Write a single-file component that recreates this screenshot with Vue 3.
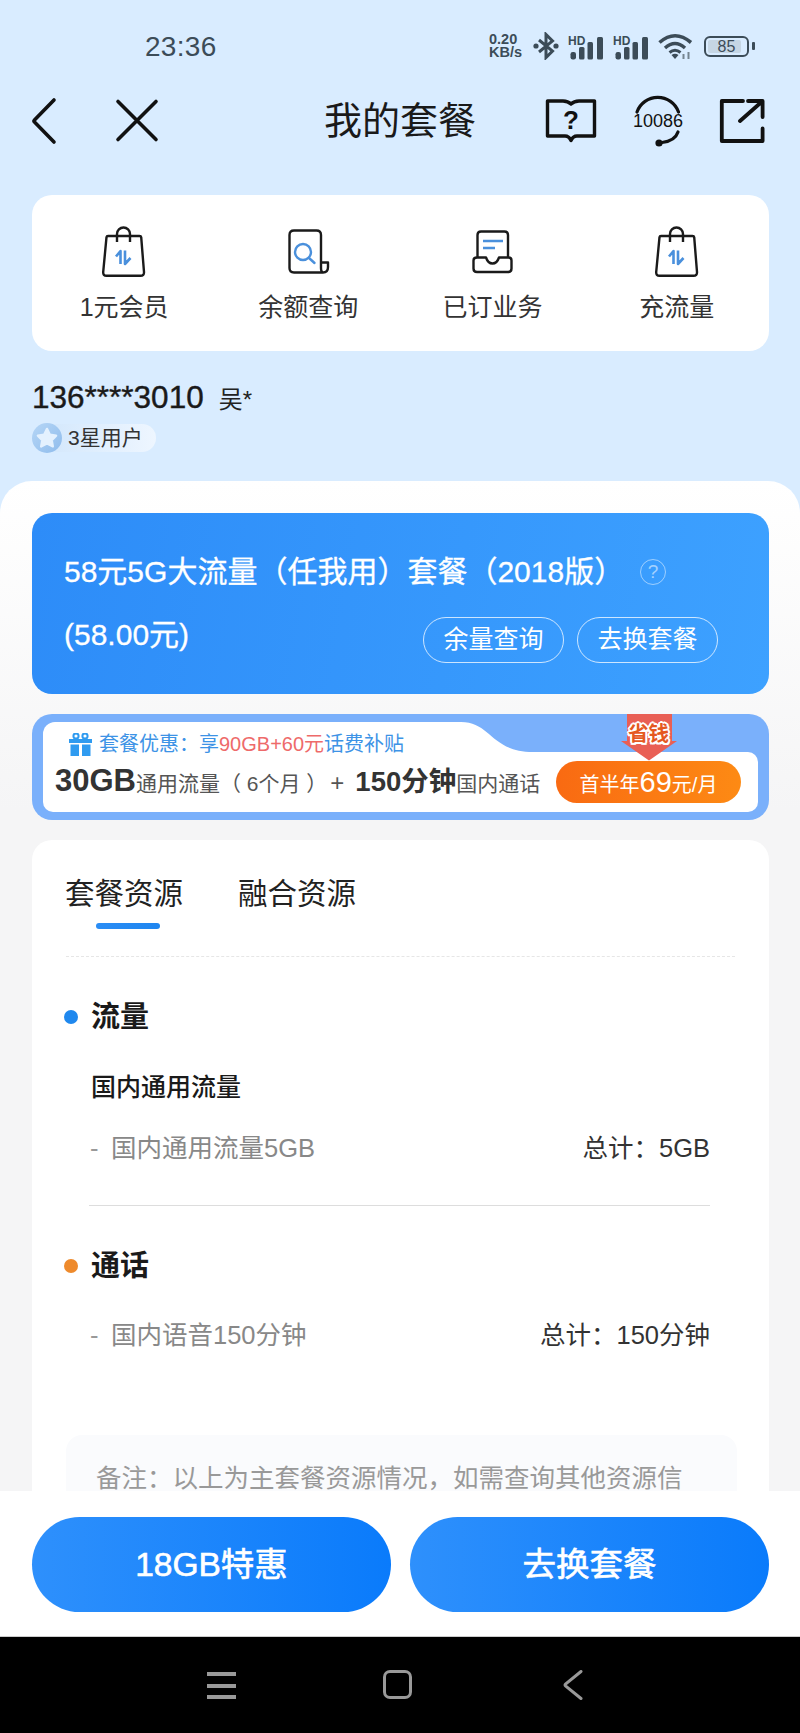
<template>
  <div class="page">
    <div class="status">
      <span class="time">23:36</span>
      <div class="status-icons">
        <div class="speed"><span>0.20</span><span>KB/s</span></div>
        <svg width="26" height="28" viewBox="0 0 26 28" class="st-bt">
          <path d="M6 8 L19.5 19 L13 25.5 V2.5 L19.5 9 L6 20" fill="none" stroke="#3c4c58" stroke-width="3" />
          <circle cx="3" cy="14" r="2.6" fill="#3c4c58" />
          <circle cx="23" cy="14" r="2.6" fill="#3c4c58" />
        </svg>
        <svg v-for="n in 2" :key="n" width="36" height="28" viewBox="0 -4 36 28">
          <text x="0" y="9" class="hd">HD</text>
          <rect x="2.5" y="16" width="5.5" height="7.5" rx="2.2" fill="#3c4c58" />
          <rect x="11" y="11" width="5.5" height="12.5" rx="1.5" fill="#3c4c58" />
          <rect x="19.5" y="6" width="5.5" height="17.5" rx="1.5" fill="#3c4c58" />
          <rect x="29" y="1" width="6" height="22.5" rx="1.5" fill="#3c4c58" />
        </svg>
        <svg width="35" height="27" viewBox="0 0 35 27">
          <path d="M1.5 9.5 Q17 -4 33 9.5" fill="none" stroke="#3c4c58" stroke-width="3.6" />
          <path d="M7 15 Q17 6 27 15" fill="none" stroke="#3c4c58" stroke-width="3.4" />
          <path d="M11.5 19.5 Q17 15 22.5 19.5" fill="none" stroke="#3c4c58" stroke-width="3" />
          <path d="M13.5 22 L17 26 L20.5 22 Q17 19.5 13.5 22 Z" fill="#3c4c58" />
          <path d="M25.5 21 V26 M30.5 19 V26" stroke="#75848f" stroke-width="2" />
        </svg>
        <div class="battery">
          <div class="battery-body"><span class="battery-fill"></span><span class="battery-num">85</span></div>
          <i class="battery-nub"></i>
        </div>
      </div>
    </div>

    <div class="topbar">
      <div class="top-left">
        <svg width="28" height="48" viewBox="0 0 28 48">
          <path d="M24 3 L4.5 23 Q3.5 24 4.5 25 L24 45" fill="none" stroke="#111" stroke-width="3.6" stroke-linecap="round" />
        </svg>
        <svg width="46" height="46" viewBox="0 0 46 46">
          <path d="M4 3.5 L42 41.5 M42 3.5 L4 41.5" fill="none" stroke="#111" stroke-width="3.6" stroke-linecap="round" />
        </svg>
      </div>
      <div class="title">我的套餐</div>
      <div class="top-right">
        <svg width="54" height="48" viewBox="0 0 54 48">
          <path d="M3.5 4 H19 Q24 4 27 7 Q30 4 35 4 H50.5 V39 H33 Q29 39 27 43.5 Q25 39 21 39 H3.5 Z" fill="none" stroke="#111" stroke-width="3.4" stroke-linejoin="round" />
          <text x="27" y="32" text-anchor="middle" class="book-q">?</text>
        </svg>
        <svg width="54" height="52" viewBox="0 0 54 52">
          <path d="M6 17 A22 22 0 0 1 47.5 17" fill="none" stroke="#111" stroke-width="3.2" stroke-linecap="round" />
          <text x="27" y="31.5" text-anchor="middle" class="hot-num">10086</text>
          <path d="M47 37 Q44 46 31 47.5" fill="none" stroke="#111" stroke-width="3.2" stroke-linecap="round" />
          <circle cx="28" cy="48" r="3.6" fill="#111" />
        </svg>
        <svg width="48" height="48" viewBox="0 0 48 48">
          <path d="M25 4 H3.8 V44 H44.6 V31.5" fill="none" stroke="#111" stroke-width="3.8" stroke-linecap="round" stroke-linejoin="round" />
          <path d="M22 24 L43.5 5 M30 4 H44.6 V20" fill="none" stroke="#111" stroke-width="3.8" stroke-linecap="round" stroke-linejoin="round" />
        </svg>
      </div>
    </div>

    <div class="shortcuts">
      <div v-for="item in shortcuts" :key="item.label" class="shortcut">
        <div class="shortcut-icon">
          <svg v-if="item.icon === 'bag'" width="48" height="52" viewBox="0 0 48 52">
            <path d="M6.5 11.2 Q6.7 10 8 10 H39.5 Q41 10 41.2 11.2 L44 46 Q44.2 49.8 40.5 49.8 H6.5 Q3 49.8 3.2 46 Z" fill="none" stroke="#1a1a1a" stroke-width="2.4" stroke-linejoin="round" />
            <path d="M17 16 V8 A6.5 6.5 0 0 1 30 8 V16" fill="none" stroke="#1a1a1a" stroke-width="2.4" />
            <path d="M20.5 38 V25 L16 30.5 M25 24.5 V38 L30.5 32" fill="none" stroke="#4a90dc" stroke-width="2.6" stroke-linejoin="round" />
          </svg>
          <svg v-else-if="item.icon === 'doc'" width="46" height="50" viewBox="0 0 46 50">
            <path d="M36 36 V8 Q36 3.5 31.5 3.5 H9 Q4.5 3.5 4.5 8 V41 Q4.5 45.5 9 45.5 H38 Q43 45.5 43 40 V35.5 H36 V41 Q36 45.5 38 45.5" fill="none" stroke="#1a1a1a" stroke-width="2.4" stroke-linejoin="round" />
            <circle cx="18" cy="25" r="8" fill="none" stroke="#4a90dc" stroke-width="2.4" />
            <path d="M24 31 L29.5 36" fill="none" stroke="#4a90dc" stroke-width="2.4" stroke-linecap="round" />
          </svg>
          <svg v-else width="46" height="48" viewBox="0 0 46 48">
            <path d="M7.5 29 V7 Q7.5 3.5 11 3.5 H34.5 Q38 3.5 38 7 V29" fill="none" stroke="#1a1a1a" stroke-width="2.4" />
            <path d="M7 29.5 H16 Q18 35.5 22.5 35.5 Q27 35.5 29 29.5 H38.5 Q41.5 29.5 41.5 32.5 V40.5 Q41.5 44 38 44 H7 Q3.5 44 3.5 40.5 V32.5 Q3.5 29.5 7 29.5 Z" fill="#fff" stroke="#1a1a1a" stroke-width="2.4" stroke-linejoin="round" />
            <path d="M13 13 H33 M13 20 H25" fill="none" stroke="#4a90dc" stroke-width="2.4" />
          </svg>
        </div>
        <div class="shortcut-label">{{ item.label }}</div>
      </div>
    </div>

    <div class="user">
      <div class="user-line"><span class="phone">136****3010</span><span class="name">吴*</span></div>
      <div class="level">
        <div class="level-star">
          <svg width="22" height="22" viewBox="0 0 24 24">
            <path d="M12 2 L15.2 8.4 L22 9.4 L17.2 14.3 L18.4 21.2 L12 18 L5.6 21.2 L6.8 14.3 L2 9.4 L8.8 8.4 Z" fill="#e4f1fe" stroke="#e4f1fe" stroke-width="2.5" stroke-linejoin="round" />
          </svg>
        </div>
        <span class="level-text">3星用户</span>
      </div>
    </div>

    <div class="sheet">
      <div class="plan">
        <div class="plan-title">
          <span>58元5G大流量（任我用）套餐（2018版）</span>
          <i class="plan-help">?</i>
        </div>
        <div class="plan-row">
          <span class="plan-price">(58.00元)</span>
          <div class="plan-btns">
            <div class="plan-btn">余量查询</div>
            <div class="plan-btn">去换套餐</div>
          </div>
        </div>
      </div>

      <div class="promo">
        <div class="promo-top">
          <div class="promo-tab">
            <svg width="25" height="23" viewBox="0 0 25 23">
              <path d="M1 6 H24 V10 H1 Z M2.5 11.5 H11 V23 H2.5 Z M14 11.5 H22.5 V23 H14 Z" fill="#2f9bf0" />
              <circle cx="8" cy="3" r="2.6" fill="none" stroke="#2f9bf0" stroke-width="2" />
              <circle cx="17" cy="3" r="2.6" fill="none" stroke="#2f9bf0" stroke-width="2" />
            </svg>
            <span class="promo-text">套餐优惠：享<em>90GB+60元</em>话费补贴</span>
          </div>
          <svg class="promo-curve" width="72" height="30" viewBox="0 0 72 30" preserveAspectRatio="none">
            <path d="M0 0 C30 0 30 30 72 30 L0 30 Z" fill="#fff" />
          </svg>
        </div>
        <div class="promo-body">
          <span class="promo-desc"><b>30GB</b>通用流量（ 6个月 ）<i class="plus">+</i><b class="mins">150分钟</b>国内通话</span>
          <div class="promo-buy">首半年<span>69</span>元/月</div>
        </div>
        <div class="save">
          <svg width="58" height="47" viewBox="0 0 58 47">
            <path d="M7 0 H52 V27 H57 L29 46.5 L1 27 H7 Z" fill="#e95f55" />
          </svg>
          <span class="save-text">省钱</span>
        </div>
      </div>

      <div class="res">
        <div class="tabs">
          <div class="tab active">
            <span>套餐资源</span>
            <i class="tab-bar"></i>
          </div>
          <div class="tab">融合资源</div>
        </div>
        <div class="dash"></div>

        <div class="sec-head">
          <i class="dot blue"></i>
          <span>流量</span>
        </div>
        <div class="sec-sub">国内通用流量</div>
        <div class="sec-row">
          <span class="row-name"><i>-</i>国内通用流量5GB</span>
          <span class="row-total">总计：5GB</span>
        </div>
        <div class="sec-line"></div>

        <div class="sec-head">
          <i class="dot orange"></i>
          <span>通话</span>
        </div>
        <div class="sec-row voice">
          <span class="row-name"><i>-</i>国内语音150分钟</span>
          <span class="row-total">总计：150分钟</span>
        </div>

        <div class="note">备注：以上为主套餐资源情况，如需查询其他资源信</div>
      </div>
    </div>

    <div class="footer">
      <div class="foot-btn">18GB特惠</div>
      <div class="foot-btn">去换套餐</div>
    </div>

    <div class="navbar">
      <div class="nav-menu"><i></i><i></i><i></i></div>
      <div class="nav-home"></div>
      <svg width="20" height="30" viewBox="0 0 20 30">
        <path d="M18 1.5 L2.5 14 Q1.5 15 2.5 16 L18 28.5" fill="none" stroke="#999" stroke-width="3" stroke-linecap="round" />
      </svg>
    </div>
  </div>
</template>

<script setup>
const shortcuts = [
  { label: '1元会员', icon: 'bag' },
  { label: '余额查询', icon: 'doc' },
  { label: '已订业务', icon: 'tray' },
  { label: '充流量', icon: 'bag' }
]
</script>

<style>
body {
  margin: 0;
  background: #d9ecff;
}
</style>

<style scoped>
.page {
  width: 800px;
  height: 1733px;
  display: flex;
  flex-direction: column;
  overflow: hidden;
  background: #d9ecff;
  font-family: "Liberation Sans", "Noto Sans CJK SC", sans-serif;
  color: #222;
}

/* status bar */
.status {
  height: 95px;
  flex: none;
  display: flex;
  align-items: flex-start;
  padding: 32px 45px 0 145px;
  box-sizing: border-box;
}
.time {
  font-size: 28px;
  line-height: 30px;
  color: #3c4c58;
  letter-spacing: 0.3px;
}
.status-icons {
  margin-left: auto;
  display: flex;
  align-items: center;
  gap: 9px;
}
.speed {
  width: 35px;
  display: flex;
  flex-direction: column;
  font-size: 14.5px;
  line-height: 13px;
  font-weight: 700;
  color: #3c4c58;
  white-space: nowrap;
}
.hd {
  font-family: "Liberation Sans", sans-serif;
  font-size: 12px;
  font-weight: 700;
  fill: #3c4c58;
}
.battery {
  display: flex;
  align-items: center;
  gap: 3px;
  margin-left: 2px;
}
.battery-body {
  position: relative;
  width: 45px;
  height: 21px;
  box-sizing: border-box;
  border: 2px solid #3c4c58;
  border-radius: 6px;
  display: flex;
  align-items: center;
  justify-content: center;
  overflow: hidden;
}
.battery-fill {
  position: absolute;
  left: 2px;
  top: 2px;
  bottom: 2px;
  width: 80%;
  background: #c6d6e4;
  border-radius: 2px;
}
.battery-num {
  position: relative;
  font-size: 16px;
  line-height: 17px;
  color: #3c4c58;
}
.battery-nub {
  width: 3px;
  height: 8px;
  background: #3c4c58;
  border-radius: 1px;
}

/* top bar */
.topbar {
  height: 52px;
  flex: none;
  display: grid;
  grid-template-columns: 1fr auto 1fr;
  align-items: center;
  padding: 0 34px;
}
.top-left {
  display: flex;
  align-items: center;
  gap: 56px;
  margin-left: -4px;
}
.title {
  font-size: 38px;
  line-height: 52px;
  color: #1a1a1a;
}
.top-right {
  display: flex;
  justify-content: flex-end;
  align-items: center;
  gap: 33px;
}
.book-q {
  font-family: "Liberation Sans", sans-serif;
  font-size: 26px;
  font-weight: 700;
  fill: #111;
}
.hot-num {
  font-family: "Liberation Sans", sans-serif;
  font-size: 18px;
  fill: #111;
}

/* shortcuts */
.shortcuts {
  flex: none;
  margin: 48px 31px 0 32px;
  height: 156px;
  box-sizing: border-box;
  padding-top: 31px;
  background: #fff;
  border-radius: 20px;
  display: grid;
  grid-template-columns: repeat(4, 1fr);
}
.shortcut {
  display: flex;
  flex-direction: column;
  align-items: center;
}
.shortcut-icon {
  height: 52px;
  display: flex;
  align-items: center;
  justify-content: center;
}
.shortcut-label {
  margin-top: 11px;
  font-size: 25px;
  line-height: 36px;
  color: #333;
}

/* user */
.user {
  flex: none;
  margin: 26px 0 0 32px;
}
.user-line {
  display: flex;
  align-items: center;
  height: 40px;
}
.phone {
  font-size: 31.5px;
  color: #1a1a1a;
  -webkit-text-stroke: 0.4px #1a1a1a;
}
.name {
  font-size: 24px;
  margin-left: 15px;
  color: #222;
}
.level {
  margin-top: 6px;
  display: flex;
  align-items: center;
  height: 30px;
}
.level-star {
  position: relative;
  z-index: 1;
  width: 30px;
  height: 30px;
  border-radius: 50%;
  background: linear-gradient(135deg, #b6d6f6, #8fbcec);
  display: flex;
  align-items: center;
  justify-content: center;
  box-sizing: border-box;
}
.level-text {
  margin-left: -12px;
  height: 28px;
  line-height: 28px;
  padding: 0 13px 0 18px;
  border-radius: 0 14px 14px 0;
  font-size: 21px;
  color: #333;
  background: linear-gradient(90deg, #d4e8fc, #eef6ff);
}

/* white sheet */
.sheet {
  flex: 1;
  min-height: 0;
  margin-top: 28px;
  padding: 32px 31px 0 32px;
  overflow: hidden;
  border-radius: 32px 32px 0 0;
  background: linear-gradient(180deg, #fff 0, #f5f5f6 330px);
}
.plan {
  height: 181px;
  box-sizing: border-box;
  padding: 40px 51px 0 32px;
  border-radius: 20px;
  background: linear-gradient(100deg, #2d8cf8, #3da1ff);
  color: #fff;
}
.plan-title {
  display: flex;
  align-items: center;
  font-size: 30px;
  line-height: 38px;
  white-space: nowrap;
  -webkit-text-stroke: 0.3px #fff;
}
.plan-help {
  width: 26px;
  height: 26px;
  margin-left: 16px;
  box-sizing: border-box;
  border: 1.5px solid rgba(255, 255, 255, 0.5);
  border-radius: 50%;
  font-style: normal;
  font-size: 19px;
  line-height: 23px;
  text-align: center;
  color: rgba(255, 255, 255, 0.55);
  -webkit-text-stroke: 0;
}
.plan-row {
  margin-top: 26px;
  display: flex;
  justify-content: space-between;
  align-items: flex-start;
}
.plan-price {
  font-size: 30px;
  line-height: 36px;
  -webkit-text-stroke: 0.3px #fff;
}
.plan-btns {
  display: flex;
  gap: 13px;
}
.plan-btn {
  width: 141px;
  height: 46px;
  box-sizing: border-box;
  border: 1.5px solid rgba(255, 255, 255, 0.75);
  border-radius: 23px;
  font-size: 25px;
  line-height: 43px;
  text-align: center;
}

/* promo */
.promo {
  position: relative;
  margin-top: 20px;
  height: 106px;
  box-sizing: border-box;
  padding: 8px 11px;
  border-radius: 20px;
  background: #7ab0fb;
}
.promo-top {
  display: flex;
  height: 30px;
}
.promo-tab {
  width: 418px;
  height: 30px;
  box-sizing: border-box;
  padding: 14px 0 0 25px;
  display: flex;
  align-items: center;
  gap: 6px;
  background: #fff;
  border-radius: 12px 0 0 0;
}
.promo-curve {
  display: block;
}
.promo-text {
  font-size: 20px;
  line-height: 26px;
  color: #3d93e6;
  white-space: nowrap;
}
.promo-text em {
  font-style: normal;
  color: #ee6a6a;
}
.promo-body {
  height: 60px;
  box-sizing: border-box;
  padding: 0 17px 0 12px;
  background: #fff;
  border-radius: 0 10px 10px 10px;
  display: flex;
  align-items: center;
  justify-content: space-between;
}
.promo-desc {
  font-size: 21px;
  line-height: 34px;
  color: #555;
  white-space: nowrap;
}
.promo-desc b {
  font-size: 31px;
  font-weight: 700;
  color: #333;
}
.plus {
  font-style: normal;
  font-size: 24px;
  margin: 0 11px 0 3px;
}
.promo-desc .mins {
  font-size: 27.5px;
}
.promo-buy {
  width: 185px;
  height: 42px;
  border-radius: 21px;
  background: linear-gradient(90deg, #f96a12, #fd8a14);
  color: #fff;
  font-size: 20px;
  line-height: 42px;
  text-align: center;
  white-space: nowrap;
}
.promo-buy span {
  font-size: 29px;
}
.save {
  position: absolute;
  left: 588px;
  top: 0;
  width: 58px;
  height: 47px;
}
.save svg {
  display: block;
}
.save-text {
  position: absolute;
  left: 8px;
  top: 5px;
  font-size: 20.5px;
  line-height: 30px;
  font-weight: 700;
  color: #e5581f;
  white-space: nowrap;
  text-shadow: 2px 0 0 #fff, -2px 0 0 #fff, 0 2px 0 #fff, 0 -2px 0 #fff, 1.5px 1.5px 0 #fff, -1.5px 1.5px 0 #fff, 1.5px -1.5px 0 #fff, -1.5px -1.5px 0 #fff;
}

/* resources */
.res {
  margin-top: 20px;
  padding: 36px 34px 0 33px;
  height: 700px;
  background: #fff;
  border-radius: 20px 20px 0 0;
}
.tabs {
  display: flex;
  align-items: flex-start;
  gap: 55px;
  height: 53px;
}
.tab {
  font-size: 29.5px;
  line-height: 36px;
  color: #222;
  white-space: nowrap;
}
.tab span {
  display: block;
}
.tab-bar {
  display: block;
  width: 64px;
  height: 6px;
  margin: 11px 0 0 31px;
  border-radius: 3px;
  background: linear-gradient(90deg, #2a8df5, #1f86f0);
}
.dash {
  margin-top: 27px;
  margin-left: 1px;
  border-top: 1.5px dashed #e6e6e6;
}
.sec-head {
  display: flex;
  align-items: center;
  gap: 13px;
  height: 40px;
  margin-top: 40px;
  margin-left: -1px;
  font-size: 29px;
  font-weight: 700;
  color: #1a1a1a;
}
.sec-head span {
  line-height: 36px;
  margin-top: -1px;
}
.dot {
  width: 14px;
  height: 14px;
  border-radius: 50%;
}
.dot.blue {
  background: #1f88ee;
}
.dot.orange {
  background: #ee8a2c;
}
.sec-sub {
  margin: 32px 0 0 26px;
  font-size: 25px;
  line-height: 36px;
  font-weight: 500;
  color: #1a1a1a;
}
.sec-row {
  margin: 25px 25px 0 25px;
  display: flex;
  justify-content: space-between;
  font-size: 25.5px;
  line-height: 36px;
}
.sec-row.voice {
  margin-top: 31px;
}
.row-name {
  color: #888;
}
.row-name i {
  display: inline-block;
  width: 21px;
  font-style: normal;
  color: #999;
}
.row-total {
  color: #333;
}
.sec-line {
  margin: 39px 25px 1px 24px;
  border-top: 1px solid #ddd;
}
.note {
  margin: 82px -2px 0 1px;
  height: 200px;
  box-sizing: border-box;
  padding: 25px 0 0 30px;
  background: #fafbfd;
  border-radius: 16px;
  font-size: 25.5px;
  line-height: 36px;
  color: #999;
  white-space: nowrap;
}

/* footer */
.footer {
  flex: none;
  height: 146px;
  box-sizing: border-box;
  padding: 26px 31px 0 32px;
  display: flex;
  gap: 19px;
  background: #fff;
  border-bottom: 1px solid #ccc;
}
.foot-btn {
  flex: 1;
  height: 95px;
  border-radius: 48px;
  background: linear-gradient(90deg, #2e90fc, #0a7bfb);
  color: #fff;
  font-size: 33.5px;
  line-height: 95px;
  text-align: center;
  -webkit-text-stroke: 0.6px #fff;
}

/* navigation */
.navbar {
  flex: none;
  height: 96px;
  box-sizing: border-box;
  padding: 33px 0 0 207px;
  display: flex;
  align-items: flex-start;
  background: #000;
}
.nav-menu {
  width: 29px;
  height: 27px;
  display: flex;
  flex-direction: column;
  justify-content: space-between;
  margin-top: 2px;
}
.nav-menu i {
  display: block;
  height: 4px;
  background: #999;
}
.nav-home {
  width: 29px;
  height: 29px;
  box-sizing: border-box;
  margin-left: 147px;
  border: 3.5px solid #999;
  border-radius: 7px;
}
.navbar svg {
  margin-left: 151px;
}
</style>
